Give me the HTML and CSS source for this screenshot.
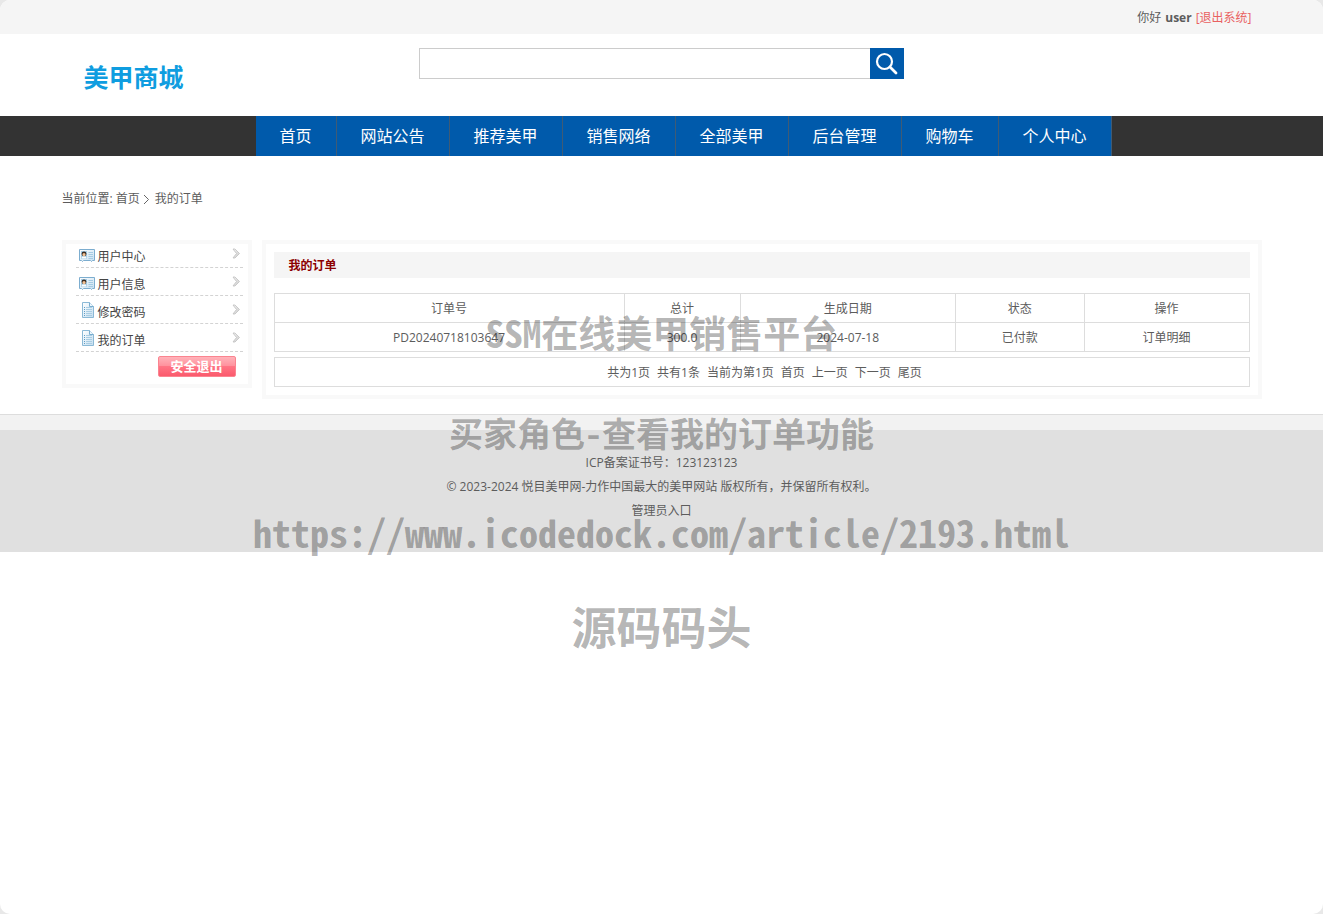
FILE: index.html
```html
<!DOCTYPE html>
<html lang="zh-CN">
<head>
<meta charset="utf-8">
<title>我的订单</title>
<link rel="stylesheet" href="styles.css">
</head>
<body>
<svg class="defs" aria-hidden="true">
  <defs>
    <linearGradient id="paper" x1="0" y1="0" x2="1" y2="1"><stop offset="0" stop-color="#ffffff"/><stop offset="1" stop-color="#c4def0"/></linearGradient>
    <linearGradient id="metal" x1="0" y1="0" x2="1" y2="1"><stop offset="0" stop-color="#f2f2f2"/><stop offset="1" stop-color="#cccccc"/></linearGradient>
    <symbol id="card" viewBox="0 0 16 13">
      <path d="M.5.5h15v11h-2l-1 1-1-1h-7l-1 1-1-1h-2z" fill="url(#paper)" stroke="#7cadcf"/>
      <path d="M2 2h6v8H2z" fill="#a5cde6"/>
      <path d="M2.500 9.500c0-3 5-3 5 0z" fill="#fff"/>
      <circle cx="5" cy="4.800" r="2.400" fill="#3b2b20"/>
      <circle cx="5" cy="5.600" r="1.600" fill="#f3c294"/>
      <path d="M9.500 3.500H14M9.500 5.500H14M9.500 7.500H14M9.500 9.500H14" stroke="#a5cbe3"/>
    </symbol>
    <symbol id="doc" viewBox="0 0 12 16">
      <path d="M.5.5h7l4 4v11H.5z" fill="url(#paper)" stroke="#8bb9d6"/>
      <path d="M7.500.5v4h4" fill="#eef7fd" stroke="#78adcf"/>
      <path d="M2 5.500h1M2 7.500h1M2 9.500h1M2 11.500h1M2 13.500h1" stroke="#5d9cc6"/>
      <path d="M4 5.500h6M4 7.500h6M4 9.500h6M4 11.500h6M4 13.500h6" stroke="#a9cde3"/>
    </symbol>
    <symbol id="arrow" viewBox="0 0 9 11">
      <path d="M1 1h2l4.500 4.500L3 10H1l1.500-2L4.500 5.500 2.500 3z" fill="url(#metal)" stroke="#c0c0c0" stroke-width=".8"/>
    </symbol>
  </defs>
</svg>
<div class="page">
  <div class="topbar">
    <div class="wrap topbar-inner">
      <span>你好</span><strong>user</strong><a class="logout" href="#">[退出系统]</a>
    </div>
  </div>
  <header class="wrap header">
    <a class="logo" href="#">美甲商城</a>
    <form class="search">
      <input class="search-box" type="text" aria-label="搜索">
      <button class="search-btn" type="button" aria-label="搜索">
        <svg width="24" height="24" viewBox="0 0 24 24" fill="none" stroke="#fff"><circle cx="9.500" cy="9.500" r="7.500" stroke-width="2.200"/><path d="M15 15l6 6" stroke-width="2.800" stroke-linecap="round"/></svg>
      </button>
    </form>
  </header>
  <nav class="nav">
    <div class="wrap nav-list">
      <a href="#">首页</a><a href="#">网站公告</a><a href="#">推荐美甲</a><a href="#">销售网络</a><a href="#">全部美甲</a><a href="#">后台管理</a><a href="#">购物车</a><a href="#">个人中心</a>
    </div>
  </nav>
  <div class="wrap crumbs">
    <span>当前位置:</span><a href="#">首页</a>
    <svg width="7" height="11" viewBox="0 0 7 11" fill="none" stroke="#666"><path d="M1 1l4.500 4.500L1 10"/></svg>
    <span class="current">我的订单</span>
  </div>
  <div class="wrap columns">
    <aside class="side">
      <ul class="menu">
        <li><a href="#"><svg class="card"><use href="#card"/></svg>用户中心<svg class="arrow"><use href="#arrow"/></svg></a></li>
        <li><a href="#"><svg class="card"><use href="#card"/></svg>用户信息<svg class="arrow"><use href="#arrow"/></svg></a></li>
        <li><a href="#"><svg class="doc"><use href="#doc"/></svg>修改密码<svg class="arrow"><use href="#arrow"/></svg></a></li>
        <li><a href="#"><svg class="doc"><use href="#doc"/></svg>我的订单<svg class="arrow"><use href="#arrow"/></svg></a></li>
      </ul>
      <button class="exit" type="button">安全退出</button>
    </aside>
    <main class="main">
      <h1 class="title">我的订单</h1>
      <table class="orders">
        <colgroup><col class="c-no"><col class="c-sum"><col class="c-date"><col class="c-state"><col class="c-act"></colgroup>
        <thead><tr><th>订单号</th><th>总计</th><th>生成日期</th><th>状态</th><th>操作</th></tr></thead>
        <tbody><tr><td>PD20240718103647</td><td>300.0</td><td>2024-07-18</td><td>已付款</td><td><a href="#">订单明细</a></td></tr></tbody>
      </table>
      <div class="pager">
        <span>共为1页</span><span>共有1条</span><span>当前为第1页</span><a href="#">首页</a><a href="#">上一页</a><a href="#">下一页</a><a href="#">尾页</a>
      </div>
    </main>
  </div>
  <div class="strip"></div>
  <footer class="footer">
    <p>ICP备案证书号：123123123</p>
    <p>© 2023-2024 悦目美甲网-力作中国最大的美甲网站 版权所有，并保留所有权利。</p>
    <p><a href="#">管理员入口</a></p>
  </footer>
  <div class="marks">
    <div class="mark mark-name">SSM在线美甲销售平台</div>
    <div class="mark mark-role">买家角色-查看我的订单功能</div>
    <div class="mark mark-url">https://www.icodedock.com/article/2193.html</div>
    <div class="mark mark-brand">源码码头</div>
  </div>
</div>
</body>
</html>
```
FILE: styles.css
```css
* { box-sizing: border-box; }
html { background: #e8e8e8; }
body {
  margin: 0;
  font: 12px/24px "Open Sans", "Noto Sans CJK SC", sans-serif;
  color: #5c5c5c;
}
a { color: inherit; text-decoration: none; }
button, input { font: inherit; }
.defs { position: absolute; width: 0; height: 0; }
.page {
  position: relative;
  min-height: 100vh;
  background: #fff;
  border-radius: 10px;
  overflow: hidden;
}
.wrap { max-width: 1200px; margin: 0 auto; }

.topbar { background: #f5f5f5; }
.topbar-inner {
  display: flex;
  justify-content: flex-end;
  gap: 4px;
  padding: 2px 10px 0 0;
  line-height: 32px;
}
.logout { color: #e96161; }

.header { display: flex; height: 82px; }
.logo {
  flex: 0 0 357px;
  padding: 25px 0 0 22px;
  font-size: 25px;
  line-height: 36px;
  font-weight: 700;
  color: #0f9de0;
}
.search { display: flex; width: 485px; height: 31px; margin-top: 14px; }
.search-box {
  flex: 1;
  min-width: 0;
  padding: 0 8px;
  border: 1px solid #ccc;
  border-right: 0;
  background: #fff;
}
.search-btn {
  display: grid;
  place-items: center;
  width: 34px;
  padding: 0;
  border: 0;
  background: #005aab;
}

.nav { background: #333; }
.nav-list { display: flex; padding-left: 194px; }
.nav-list a {
  padding: 0 24px;
  border-right: 1px solid #3f5b75;
  background: #005aab;
  color: #fff;
  font-size: 16px;
  line-height: 40px;
}

.crumbs { display: flex; align-items: center; gap: 3px; padding: 31px 0 29px; }
.current { padding-left: 2px; }

.columns { display: flex; align-items: flex-start; gap: 10px; }
.side {
  flex: 0 0 190px;
  display: flex;
  flex-direction: column;
  border: 4px solid #f9f9f9;
  padding: 0 5px 7px 10px;
  color: #444;
}
.menu { display: grid; gap: 4px; margin: 0; padding: 0; list-style: none; }
.menu a {
  display: flex;
  align-items: center;
  height: 24px;
  padding: 2px 2px 0;
  border-bottom: 1px dashed #d3d3d3;
}
.card { width: 16px; height: 13px; margin: 0 3px 2px 1px; }
.doc { width: 12px; height: 16px; margin: 0 4px 6px; }
.arrow { width: 9px; height: 11px; margin: 0 0 6px auto; }
.exit {
  align-self: flex-end;
  width: 78px;
  height: 21px;
  margin: 4px 7px 0 0;
  padding: 0;
  border: 1px solid #fb8490;
  border-radius: 2px;
  background: linear-gradient(#ffb3ba, #ff8f9b 50%, #ff7484 50%, #fb5a6d);
  color: #fff;
  font-size: 13px;
  line-height: 19px;
  font-weight: 700;
}

.main { flex: 1; min-width: 0; border: 4px solid #f9f9f9; padding: 8px; }
.title {
  margin: 0 0 15px;
  padding: 2px 0 0 15px;
  background: #f5f5f5;
  color: #8c0000;
  font-size: 12px;
  line-height: 24px;
}
.orders { width: 100%; border-collapse: collapse; table-layout: fixed; }
.orders th, .orders td {
  height: 29px;
  padding: 2px 0 0;
  border: 1px solid #ddd;
  font-weight: 400;
  text-align: center;
}
.c-no { width: 35.9%; }
.c-sum { width: 11.9%; }
.c-date { width: 22.1%; }
.c-state { width: 13.2%; }
.c-act { width: 16.9%; }
.pager {
  display: flex;
  justify-content: center;
  gap: 7px;
  margin-top: 5px;
  padding: 2px 0 0 6px;
  border: 1px solid #ddd;
  line-height: 26px;
}

.strip { height: 16px; margin-top: 15px; border-top: 1px solid #ddd; background: #f2f2f2; }
.footer { padding: 21px 0 29px; background: #e0e0e0; text-align: center; }
.footer p { margin: 0; }

.marks { position: absolute; inset: 0; pointer-events: none; }
.mark {
  position: absolute;
  left: 0;
  right: 0;
  color: rgba(0, 0, 0, .3);
  font-family: "Noto Sans Mono CJK SC", "DejaVu Sans Mono", "Noto Sans CJK SC", monospace;
  font-weight: 700;
  line-height: 48px;
  text-align: center;
  white-space: nowrap;
}
.mark-name { top: 308px; font-size: 37px; }
.mark-role { top: 409px; font-size: 34px; }
.mark-url { top: 508px; font-size: 38px; }
.mark-brand { top: 602px; font-size: 45px; }
```
